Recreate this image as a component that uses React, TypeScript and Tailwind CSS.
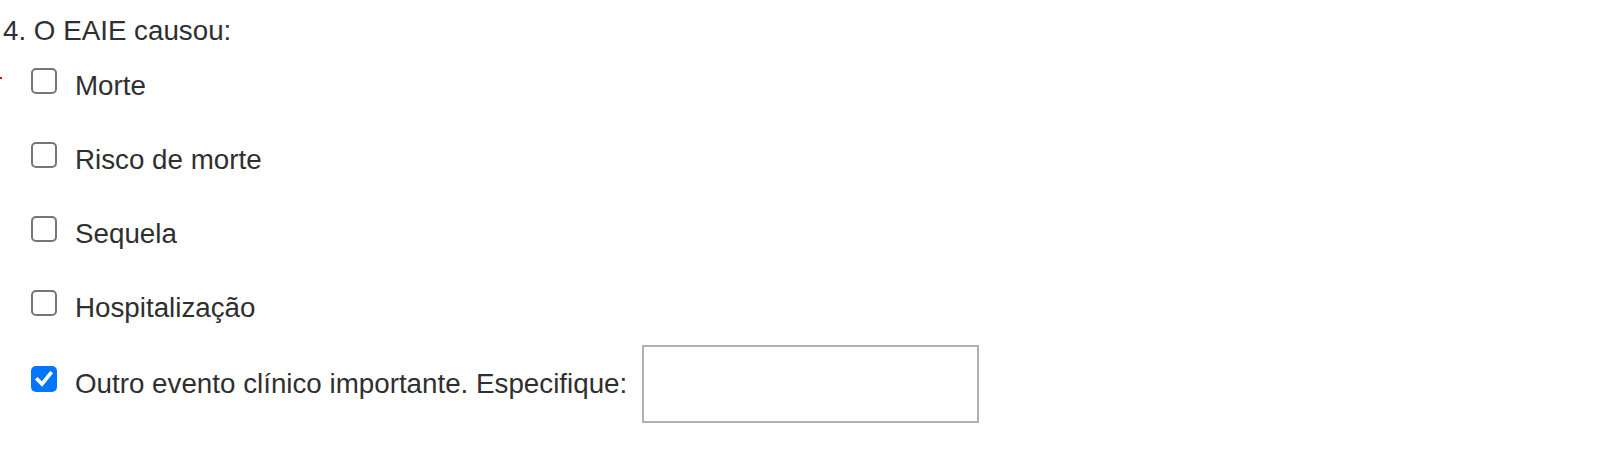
import React from "react";

const options = ["Morte", "Risco de morte", "Sequela", "Hospitalização"];

function Box({ checked = false }: { checked?: boolean }) {
  if (checked) {
    return (
      <span className="flex h-[26px] w-[26px] shrink-0 items-center justify-center rounded-[5px] bg-[#0075ff]">
        <svg width="26" height="26" viewBox="0 0 26 26" fill="none">
          <path
            d="M6.5 13.5 L11 18 L19.5 7.5"
            stroke="white"
            strokeWidth="3.6"
            strokeLinecap="square"
            strokeLinejoin="miter"
          />
        </svg>
      </span>
    );
  }
  return (
    <span className="block h-[26px] w-[26px] shrink-0 rounded-[5px] border-2 border-[#767676] bg-white" />
  );
}

export default function App() {
  return (
    <div className="h-[458px] w-[1610px] bg-white font-['Liberation_Sans',Arial,sans-serif] text-[27.75px] text-[#2f2f2f]">
      <div className="pl-[3px] pt-[11px] leading-[40px]">4. O EAIE causou:</div>

      <div className="mt-[15px] flex flex-col gap-[34px]">
        {options.map((label, i) => (
          <div key={label} className="relative flex items-start pl-[31px]">
            {i === 0 && (
              <span className="absolute left-0 top-[11px] h-[2px] w-[2px] bg-[#e00000]" />
            )}
            <span className="mt-[2px]">
              <Box />
            </span>
            <span className="ml-[18px] leading-[40px]">{label}</span>
          </div>
        ))}
      </div>

      <div className="mt-[17px] flex items-center pl-[31px]">
        <div className="flex items-start">
          <span className="mt-[2px]">
            <Box checked />
          </span>
          <span className="ml-[18px] leading-[40px]">
            Outro evento clínico importante. Especifique:
          </span>
        </div>
        <input
          type="text"
          className="ml-[15px] h-[78px] w-[337px] border-2 border-[#b0b0b0] bg-white px-2 outline-none"
        />
      </div>
    </div>
  );
}
